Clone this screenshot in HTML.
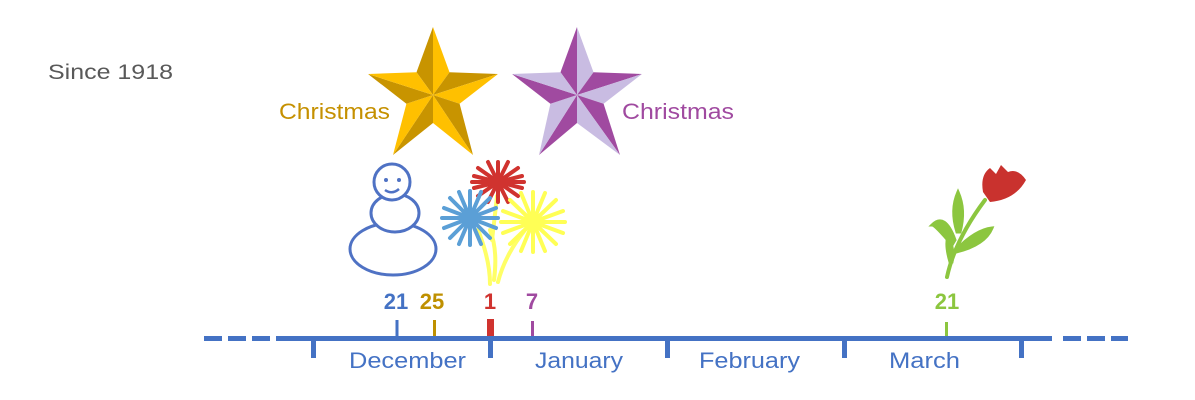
<!DOCTYPE html>
<html><head><meta charset="utf-8"><style>
html,body{margin:0;padding:0;background:#fff;}
svg{display:block}
text{font-family:"Liberation Sans",Calibri,sans-serif}
</style></head><body>
<svg width="1195" height="400" viewBox="0 0 1195 400" xmlns="http://www.w3.org/2000/svg">
<rect width="1195" height="400" fill="#fff"/>
<text x="48" y="79" font-size="21" fill="#595959" textLength="125" lengthAdjust="spacingAndGlyphs">Since 1918</text>
<text x="279" y="119" font-size="22" fill="#C59000" textLength="111" lengthAdjust="spacingAndGlyphs">Christmas</text>
<text x="622" y="119" font-size="22" fill="#A04AA0" textLength="112" lengthAdjust="spacingAndGlyphs">Christmas</text>

<g>
<polygon points="433,95 433,27 416.5,72.3" fill="#C89400"/>
<polygon points="433,95 433,27 449.5,72.3" fill="#FFC000"/>
<polygon points="433,95 498,74 449.5,72.3" fill="#C89400"/>
<polygon points="433,95 498,74 459.6,103.7" fill="#FFC000"/>
<polygon points="433,95 473,155 459.6,103.7" fill="#C89400"/>
<polygon points="433,95 473,155 433,123" fill="#FFC000"/>
<polygon points="433,95 393,155 433,123" fill="#C89400"/>
<polygon points="433,95 393,155 406.4,103.7" fill="#FFC000"/>
<polygon points="433,95 368,74 406.4,103.7" fill="#C89400"/>
<polygon points="433,95 368,74 416.5,72.3" fill="#FFC000"/>
</g>
<g>
<polygon points="577,95 577,27 560.5,72.3" fill="#A04AA0"/>
<polygon points="577,95 577,27 593.5,72.3" fill="#C9BCE2"/>
<polygon points="577,95 642,74 593.5,72.3" fill="#A04AA0"/>
<polygon points="577,95 642,74 603.6,103.7" fill="#C9BCE2"/>
<polygon points="577,95 620,155 603.6,103.7" fill="#A04AA0"/>
<polygon points="577,95 620,155 577,123" fill="#C9BCE2"/>
<polygon points="577,95 539,155 577,123" fill="#A04AA0"/>
<polygon points="577,95 539,155 550.4,103.7" fill="#C9BCE2"/>
<polygon points="577,95 512,74 550.4,103.7" fill="#A04AA0"/>
<polygon points="577,95 512,74 560.5,72.3" fill="#C9BCE2"/>
</g>

<g fill="none" stroke="#4F72C4" stroke-width="3">
<ellipse cx="393" cy="249" rx="43" ry="26" fill="#fff"/>
<ellipse cx="395" cy="213" rx="24" ry="19" fill="#fff"/>
<circle cx="392" cy="182" r="18" fill="#fff"/>
<path d="M385 190 Q392 195 399 189" stroke-width="2.5"/>
</g>
<circle cx="386" cy="180" r="2" fill="#4F72C4"/>
<circle cx="399" cy="180" r="2" fill="#4F72C4"/>

<g stroke="#FFFF66" stroke-width="4" fill="none" stroke-linecap="round">
<path d="M478 230 Q490 260 490 284"/>
<path d="M490 230 Q498 250 494 280"/>
<path d="M525 230 Q505 255 498 282"/>
<path d="M497 196 Q495 215 492 240"/>
</g>
<g stroke-linecap="round">
<g stroke="#D0332F" stroke-width="4" transform="translate(498,182)">
<path d="M-26 0H26M0 -20V20M-20 -14L20 14M-20 14L20 -14M-10 -20L10 20M-10 20L10 -20M-24 -6L24 6M-24 6L24 -6"/>
</g>
<g stroke="#5B9FD6" stroke-width="4" transform="translate(470,218)">
<path d="M-28 0H28M0 -27V27M-20 -20L20 20M-20 20L20 -20M-11 -26L11 26M-11 26L11 -26M-26 -10L26 10M-26 10L26 -10"/>
</g>
<g stroke="#FFFF55" stroke-width="4" transform="translate(533,222)">
<path d="M-32 0H32M0 -30V30M-23 -22L23 22M-23 22L23 -22M-12 -29L12 29M-12 29L12 -29M-30 -11L30 11M-30 11L30 -11"/>
</g>
</g>

<g stroke="#8CC63F" stroke-linecap="round" fill="#8CC63F">
<path d="M947 277 Q955 240 985 200" stroke-width="4" fill="none"/>
<path d="M952 245 Q935 225 932 225 Q945 212 955 240Z" stroke-width="3"/>
<path d="M957 232 Q950 210 958 192 Q966 210 960 232Z" stroke-width="3"/>
<path d="M956 250 Q975 230 992 228 Q985 245 956 252Z" stroke-width="3"/>
<path d="M950 262 Q945 245 948 236 Q955 250 952 262Z" stroke-width="3"/>
</g>
<path d="M983 192 Q980 175 990 168 L996 174 L1001 165 L1008 172 Q1018 168 1026 180 Q1015 200 990 202 Z" fill="#C9322E"/>

<g font-size="22" font-weight="bold" text-anchor="middle">
<text x="396" y="309" fill="#4472C4">21</text>
<text x="432" y="309" fill="#BF9000">25</text>
<text x="490" y="309" fill="#D0332F">1</text>
<text x="532" y="309" fill="#A04AA0">7</text>
<text x="947" y="309" fill="#8CC63F">21</text>
</g>
<rect x="395.5" y="320" width="3" height="17" fill="#4472C4"/>
<rect x="433" y="320" width="3" height="17" fill="#BF9000"/>
<rect x="487" y="319" width="7" height="18" fill="#D0332F"/>
<rect x="531" y="321" width="3" height="16" fill="#A04AA0"/>
<rect x="945" y="322" width="3" height="15" fill="#8CC63F"/>

<g fill="#4472C4">
<rect x="204" y="336" width="18" height="5"/>
<rect x="228" y="336" width="18" height="5"/>
<rect x="252" y="336" width="18" height="5"/>
<rect x="276" y="336" width="776" height="5"/>
<rect x="1063" y="336" width="18" height="5"/>
<rect x="1087" y="336" width="18" height="5"/>
<rect x="1111" y="336" width="17" height="5"/>
<rect x="311" y="336" width="5" height="22"/>
<rect x="488" y="336" width="5" height="22"/>
<rect x="665" y="336" width="5" height="22"/>
<rect x="842" y="336" width="5" height="22"/>
<rect x="1019" y="336" width="5" height="22"/>
</g>
<g font-size="22" fill="#4472C4">
<text x="349" y="368" textLength="117" lengthAdjust="spacingAndGlyphs">December</text>
<text x="535" y="368" textLength="88" lengthAdjust="spacingAndGlyphs">January</text>
<text x="699" y="368" textLength="101" lengthAdjust="spacingAndGlyphs">February</text>
<text x="889" y="368" textLength="71" lengthAdjust="spacingAndGlyphs">March</text>
</g>
</svg>
</body></html>
